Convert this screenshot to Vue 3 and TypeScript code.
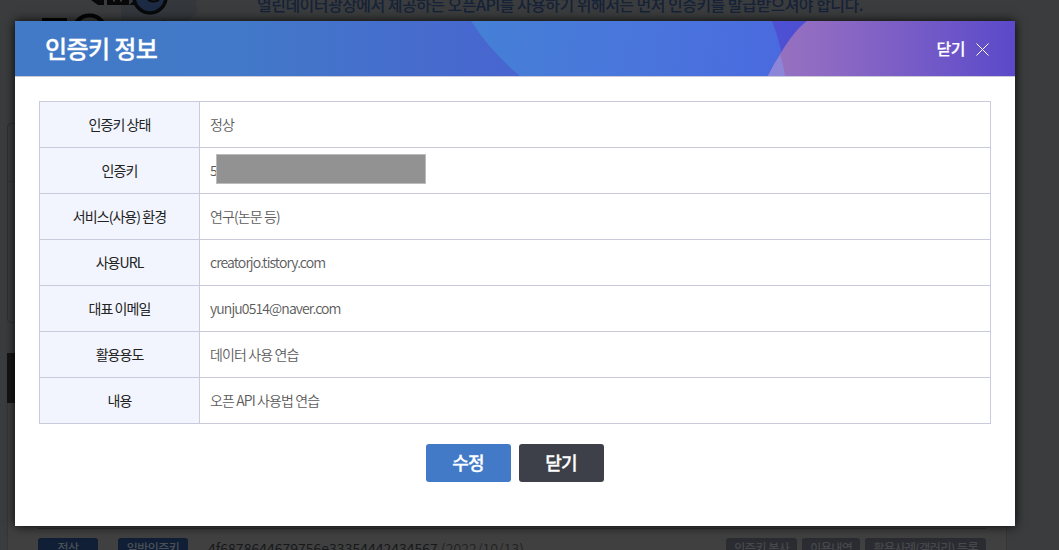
<script setup lang="ts">
interface InfoRow {
  label: string
  value: string
  masked?: boolean
}

const rows: InfoRow[] = [
  { label: '인증키 상태', value: '정상' },
  { label: '인증키', value: '5', masked: true },
  { label: '서비스(사용) 환경', value: '연구(논문 등)' },
  { label: '사용URL', value: 'creatorjo.tistory.com' },
  { label: '대표 이메일', value: 'yunju0514@naver.com' },
  { label: '활용용도', value: '데이터 사용 연습' },
  { label: '내용', value: '오픈 API 사용법 연습' },
]

const tags: string[] = ['정상', '일반인증키']
const actions: string[] = ['인증키 복사', '이용내역', '활용사례(갤러리) 등록']
</script>

<template>
  <div class="page">
    <div class="behind">
      <div class="hero">
        <svg class="art" width="170" height="24" viewBox="0 0 170 24">
          <path d="M93 0h75c-4 4 3 8 0 12l-8 9H92V8z" fill="#34383c" />
          <path d="M62 0l7 5h6V0zM78 0v5h22l6-5zM100 0h10v5h-10z" fill="#080809" />
          <path d="M85 0v1.500M92 0v1.500" stroke="#3b3c3d" stroke-width="2" />
          <circle cx="121" cy="-3" r="16" fill="#1c2b43" stroke="#08090a" stroke-width="3.500" />
          <path d="M119 0q6 3 11 0" fill="none" stroke="#08090a" stroke-width="2" />
          <path d="M13 18h25v6H13z" fill="#040405" />
          <circle cx="60.500" cy="32" r="16.500" fill="none" stroke="#040405" stroke-width="4" />
          <path d="M132 21q5-2 8 3h-10z" fill="#111214" />
        </svg>
        <p class="notice">열린데이터광장에서 제공하는 오픈API를 사용하기 위해서는 먼저 인증키를 발급받으셔야 합니다.</p>
      </div>
      <div class="search-box"><div class="search-line"></div></div>
      <div class="list-head"></div>
      <div class="list">
        <div class="list-row">
          <span v-for="t in tags" :key="t" class="tag">{{ t }}</span>
          <span class="key">4f6878644679756e33354442434567 <em>(2022/10/13)</em></span>
          <span class="actions">
            <span v-for="a in actions" :key="a" class="action">{{ a }}</span>
          </span>
        </div>
      </div>
    </div>

    <section class="modal">
      <header class="head">
        <svg class="head-art" width="1000" height="55" viewBox="0 0 1000 55" preserveAspectRatio="none">
          <defs>
            <linearGradient id="base" gradientUnits="userSpaceOnUse" x1="0" y1="0" x2="1000" y2="0">
              <stop offset="0" stop-color="#427ac7" />
              <stop offset=".22" stop-color="#4279c8" />
              <stop offset=".5" stop-color="#4865d0" />
              <stop offset=".78" stop-color="#4d4fd2" />
              <stop offset="1" stop-color="#4d4fd2" />
            </linearGradient>
            <linearGradient id="blue" gradientUnits="userSpaceOnUse" x1="470" y1="0" x2="770" y2="50">
              <stop offset="0" stop-color="#457fd6" />
              <stop offset=".5" stop-color="#4a76dc" />
              <stop offset="1" stop-color="#4a6adf" />
            </linearGradient>
            <linearGradient id="violet" gradientUnits="userSpaceOnUse" x1="753" y1="0" x2="1000" y2="0">
              <stop offset="0" stop-color="#9873bf" />
              <stop offset=".25" stop-color="#8d69c3" />
              <stop offset=".75" stop-color="#6c55c8" />
              <stop offset="1" stop-color="#5a49c9" />
            </linearGradient>
          </defs>
          <path d="M0 0h1000v55H0z" fill="url(#base)" />
          <path d="M456 0Q475 30 505 55H770Q767 25 757 0z" fill="url(#blue)" />
          <path d="M753 55Q775 12 792 0H1000V55z" fill="url(#violet)" />
          <path d="M753 55Q758 44 765 34Q768 42 770 55z" fill="#8d86d8" />
        </svg>
        <h1>인증키 정보</h1>
        <button class="close" type="button">
          <span>닫기</span>
          <svg width="13" height="13" viewBox="0 0 13 13">
            <path d="M.5.500l12 12M12.500.500l-12 12" stroke="#fff" stroke-width="1" />
          </svg>
        </button>
      </header>

      <table class="info">
        <tbody>
          <tr v-for="r in rows" :key="r.label">
            <th>{{ r.label }}</th>
            <td>
              <div class="cell">{{ r.value }}<span v-if="r.masked" class="mask"></span></div>
            </td>
          </tr>
        </tbody>
      </table>

      <div class="buttons">
        <button class="btn primary" type="button">수정</button>
        <button class="btn dark" type="button">닫기</button>
      </div>
    </section>
  </div>
</template>

<style>
body {
  margin: 0;
  overflow: hidden;
}
</style>

<style scoped>
.page {
  position: relative;
  width: 1059px;
  height: 550px;
  overflow: hidden;
  background: #3b3c3d;
  font-family: "Noto Sans CJK KR", "Noto Sans", sans-serif;
}
.page * {
  box-sizing: border-box;
}
.behind {
  height: 550px;
  width: 1000px;
  margin-left: 7px;
  overflow: hidden;
}
.hero {
  display: flex;
  height: 123px;
  padding-left: 22px;
}
.art {
  display: block;
  flex: none;
}
.notice {
  margin: -8px 0 0 58px;
  font-size: 16px;
  line-height: 24px;
  font-weight: 500;
  letter-spacing: -0.53px;
  white-space: nowrap;
  color: #152238;
}
.search-box {
  height: 200px;
  border: 1px solid #2f3031;
  border-radius: 4px;
}
.search-line {
  height: 58px;
  border-bottom: 1px solid #333435;
}
.list-head {
  height: 50px;
  margin-top: 30px;
  background: #151517;
}
.list {
  height: 147px;
  padding: 125px 20px 0 30px;
  border: solid #34363a;
  border-width: 0 1px;
  background: #404040;
}
.list-row {
  display: flex;
  height: 40px;
  padding-top: 9px;
  border-top: 1px solid #303030;
}
.tag {
  width: 60px;
  height: 24px;
  margin-right: 20px;
  border-radius: 3px;
  background: #101f35;
  color: #4a5058;
  font-size: 12px;
  line-height: 20px;
  font-weight: 500;
  text-align: center;
  letter-spacing: -0.5px;
}
.tag + .tag {
  width: 70px;
}
.key {
  font-size: 14px;
  line-height: 20px;
  letter-spacing: 0;
  color: #17181a;
}
.key em {
  font-style: normal;
  font-weight: 350;
  letter-spacing: 0.1px;
  color: #222;
}
.actions {
  display: flex;
  gap: 5px;
  margin-left: auto;
}
.action {
  height: 24px;
  padding: 0 8px;
  border-radius: 3px;
  background: #2b2c31;
  color: #46484c;
  font-size: 12px;
  line-height: 20px;
  font-weight: 500;
  letter-spacing: -0.5px;
}
.modal {
  position: absolute;
  left: 15px;
  top: 21px;
  width: 1000px;
  height: 505px;
  background: #fff;
  box-shadow: 0 0 10px rgba(0, 0, 0, 0.9);
}
.head {
  position: relative;
  display: flex;
  align-items: center;
  justify-content: space-between;
  height: 56px;
  padding: 0 26px 0 30px;
  border-bottom: 1px solid #c9cbdd;
}
.head-art {
  position: absolute;
  inset: 0;
}
h1 {
  position: relative;
  margin: -2px 0 0;
  color: #fff;
  font-size: 24px;
  line-height: 53px;
  font-weight: 500;
  letter-spacing: -0.6px;
  -webkit-text-stroke: 0.3px #fff;
}
.close {
  position: relative;
  display: flex;
  align-items: center;
  gap: 11px;
  padding: 0;
  border: 0;
  background: none;
  color: #fff;
  font: 500 16px/24px "Noto Sans CJK KR", sans-serif;
  letter-spacing: -0.5px;
  -webkit-text-stroke: 0.2px #fff;
}
.close span {
  margin-top: -2px;
}
.close svg {
  margin-top: 2px;
}
.info {
  width: 952px;
  margin: 24px 0 0 24px;
  border-collapse: collapse;
  table-layout: fixed;
}
.info th,
.info td {
  height: 46px;
  padding: 0 0 2px;
  border: 1px solid #c9cbdd;
  font-size: 14px;
  letter-spacing: -0.95px;
}
.info th {
  width: 160px;
  background: #f2f5fd;
  color: #222;
  font-weight: 400;
}
.info td {
  color: #5c5c5c;
  font-weight: 350;
  letter-spacing: -0.88px;
}
.cell {
  display: flex;
  align-items: center;
  height: 20px;
  padding-left: 10px;
}
.mask {
  width: 210px;
  height: 30px;
  flex: none;
  margin: -6px 0 -5px -1px;
  border: 1px solid #bcbcbc;
  background: #929292;
}
.buttons {
  display: flex;
  justify-content: center;
  gap: 8px;
  margin-top: 20px;
}
.btn {
  width: 85px;
  height: 38px;
  padding: 0 1px 2px 0;
  border: 0;
  border-radius: 3px;
  color: #fff;
  font: 500 18px/36px "Noto Sans CJK KR", sans-serif;
  letter-spacing: -0.9px;
  -webkit-text-stroke: 0.3px #fff;
}
.primary {
  background: #427ac7;
}
.dark {
  background: #3e4049;
}
</style>
